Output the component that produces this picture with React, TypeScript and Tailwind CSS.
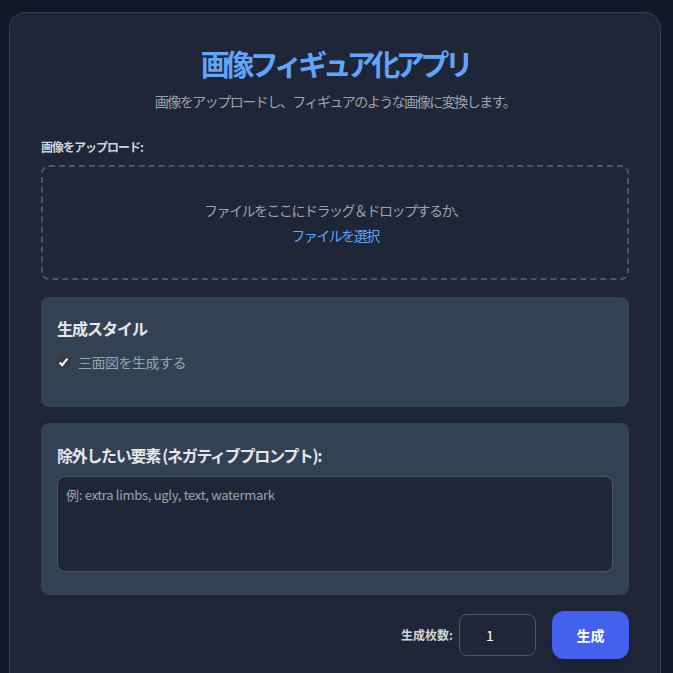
import { useState } from 'react';

const font = "font-['Noto_Sans_CJK_JP','Noto_Sans',sans-serif]";

export default function App() {
  const [threeView, setThreeView] = useState(true);
  const [count, setCount] = useState(1);

  return (
    <div className={`min-h-screen bg-[#111827] pt-[12px] pl-[9px] ${font}`}>
      <div className="w-[652px] rounded-2xl border border-[#374151] bg-[#1f2637] px-[31px] pt-[28px] pb-[32px]">
        <h1 className="text-center text-[29px] font-bold leading-[44px] tracking-[-4.5px] text-[#60a5fa]">
          画像フィギュア化アプリ
        </h1>
        <p className="mt-[6px] text-center text-[14px] leading-[20px] tracking-[-1.5px] text-[#9ca3af]">
          画像をアップロードし、フィギュアのような画像に変換します。
        </p>

        <label className="mt-[27px] block text-[12px] font-bold leading-[18px] tracking-[-1px] text-[#d1d5db]">
          画像をアップロード:
        </label>
        <div className="mt-[9px] flex h-[115px] flex-col items-center justify-center rounded-lg border-2 border-dashed border-[#4b5563] text-[14px] leading-[25px] tracking-[-1.5px]">
          <span className="text-[#9ca3af]">ファイルをここにドラッグ＆ドロップするか、</span>
          <span className="cursor-pointer text-[#60a5fa]">ファイルを選択</span>
        </div>

        <div className="mt-[17px] h-[110px] rounded-lg bg-[#334155] px-[16px] pt-[19px]">
          <h2 className="text-[16px] font-bold leading-[24px] tracking-[-1px] text-[#e5e7eb]">生成スタイル</h2>
          <label className="mt-[12px] flex items-center gap-[8px] text-[14px] leading-[20px] tracking-[-0.5px] text-[#9ca3af]">
            <input
              type="checkbox"
              checked={threeView}
              onChange={(e) => setThreeView(e.target.checked)}
              className="h-[13px] w-[13px] accent-[#3b3b3b]"
            />
            三面図を生成する
          </label>
        </div>

        <div className="mt-[16px] rounded-lg bg-[#334155] px-[16px] pt-[20px] pb-[23px]">
          <h2 className="text-[16px] font-bold leading-[24px] tracking-[-1.3px] text-[#e5e7eb]">
            除外したい要素 (ネガティブプロンプト):
          </h2>
          <textarea
            placeholder="例: extra limbs, ugly, text, watermark"
            className="mt-[9px] block h-[96px] w-full resize-none rounded-lg border border-[#4b5563] bg-[#1f2637] px-[8px] py-[9px] text-[13px] leading-[18px] tracking-[-0.3px] text-[#e5e7eb] placeholder:text-[#9ca3af] outline-none"
          />
        </div>

        <div className="mt-[16px] flex items-center justify-end">
          <label className="text-[12px] font-bold text-[#d1d5db]">生成枚数:</label>
          <input
            type="number"
            value={count}
            onChange={(e) => setCount(Number(e.target.value))}
            className="ml-[6px] h-[42px] w-[77px] rounded-lg border border-[#4b5563] bg-[#1f2637] text-center text-[14px] text-white outline-none [appearance:textfield]"
          />
          <button className="ml-[16px] h-[48px] w-[77px] rounded-xl bg-[#4361ee] text-[14px] font-bold text-white shadow-lg">
            生成
          </button>
        </div>
      </div>
    </div>
  );
}
